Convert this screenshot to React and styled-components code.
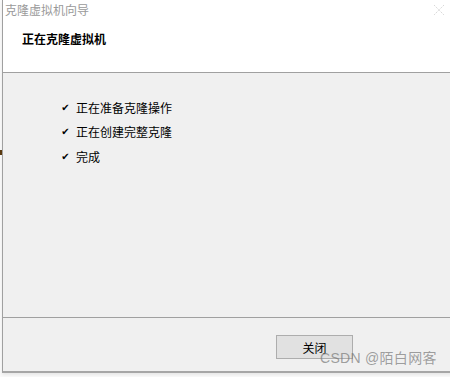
import React from "react";
import styled, { createGlobalStyle } from "styled-components";

const GlobalStyle = createGlobalStyle`
  html, body {
    margin: 0;
    padding: 0;
    background: #fafafa;
  }
  body {
    font-family: "Noto Sans CJK SC", "Microsoft YaHei", sans-serif;
    font-size: 12px;
    color: #000;
  }
`;

const steps = ["正在准备克隆操作", "正在创建完整克隆", "完成"];

const App = () => {
  return (
    <Page>
      <GlobalStyle />
      <Window>
        <TitleBar>
          <span>克隆虚拟机向导</span>
          <CloseX>
            <svg width="12" height="12" viewBox="0 0 12 12">
              <path
                d="M1 1 L11 11 M11 1 L1 11"
                stroke="#d8d8d8"
                strokeWidth="1"
                strokeDasharray="1.5 1"
              />
            </svg>
          </CloseX>
        </TitleBar>
        <Header>
          <HeaderTitle>正在克隆虚拟机</HeaderTitle>
        </Header>
        <Body>
          {steps.map((s) => (
            <Step key={s}>
              <Check>✔</Check>
              <span>{s}</span>
            </Step>
          ))}
        </Body>
        <Footer>
          <Button>关闭</Button>
        </Footer>
      </Window>
      <SideMark />
      <Watermark>CSDN @陌白网客</Watermark>
    </Page>
  );
};

export default App;

const Page = styled.div`
  position: relative;
  width: 450px;
  height: 377px;
  overflow: hidden;
  background: #fafafa;
`;
const Window = styled.div`
  margin-left: 2px;
  width: 460px;
  height: 371px;
  display: flex;
  flex-direction: column;
  background: #f0f0f0;
  border-left: 1px solid #a0a0a0;
  border-bottom: 2px solid #a6a6a6;
  box-shadow: 0 2px 3px rgba(0, 0, 0, 0.08);
`;
const TitleBar = styled.div`
  height: 20px;
  background: #fff;
  display: flex;
  align-items: center;
  justify-content: space-between;
  padding-left: 2px;
  padding-right: 18px;
  color: #9a9a9a;
  font-size: 12px;
  span {
    margin-top: -2px;
  }
`;
const CloseX = styled.div`
  display: flex;
  align-items: center;
  margin-top: -1px;
`;
const Header = styled.div`
  height: 52px;
  background: #fff;
  border-bottom: 1px solid #a0a0a0;
  display: flex;
  align-items: center;
  padding-left: 19px;
`;
const HeaderTitle = styled.div`
  font-weight: bold;
  font-size: 12px;
  margin-top: -15px;
`;
const Body = styled.div`
  flex: 1;
  display: flex;
  flex-direction: column;
  padding: 22px 0 0 57px;
  border-bottom: 1px solid #a0a0a0;
`;
const Step = styled.div`
  height: 24.5px;
  display: flex;
  align-items: center;
  gap: 5px;
  font-size: 12px;
`;
const Check = styled.span`
  font-size: 10px;
  width: 11px;
  text-align: center;
  font-family: "DejaVu Sans", sans-serif;
`;
const Footer = styled.div`
  height: 53px;
  display: flex;
  padding-left: 273px;
  padding-top: 17px;
  box-sizing: border-box;
`;
const Button = styled.div`
  width: 75px;
  height: 22px;
  background: #e1e1e1;
  border: 1px solid #adadad;
  display: flex;
  align-items: center;
  justify-content: center;
  font-size: 12px;
`;
const SideMark = styled.div`
  position: absolute;
  left: 0;
  top: 150px;
  width: 2px;
  height: 5px;
  background: #5a3a10;
`;
const Watermark = styled.div`
  position: absolute;
  left: 320px;
  top: 347px;
  font-family: "Liberation Sans", "Noto Sans CJK SC", sans-serif;
  font-size: 14px;
  letter-spacing: 0.3px;
  color: rgba(120, 120, 120, 0.7);
  white-space: nowrap;
`;
